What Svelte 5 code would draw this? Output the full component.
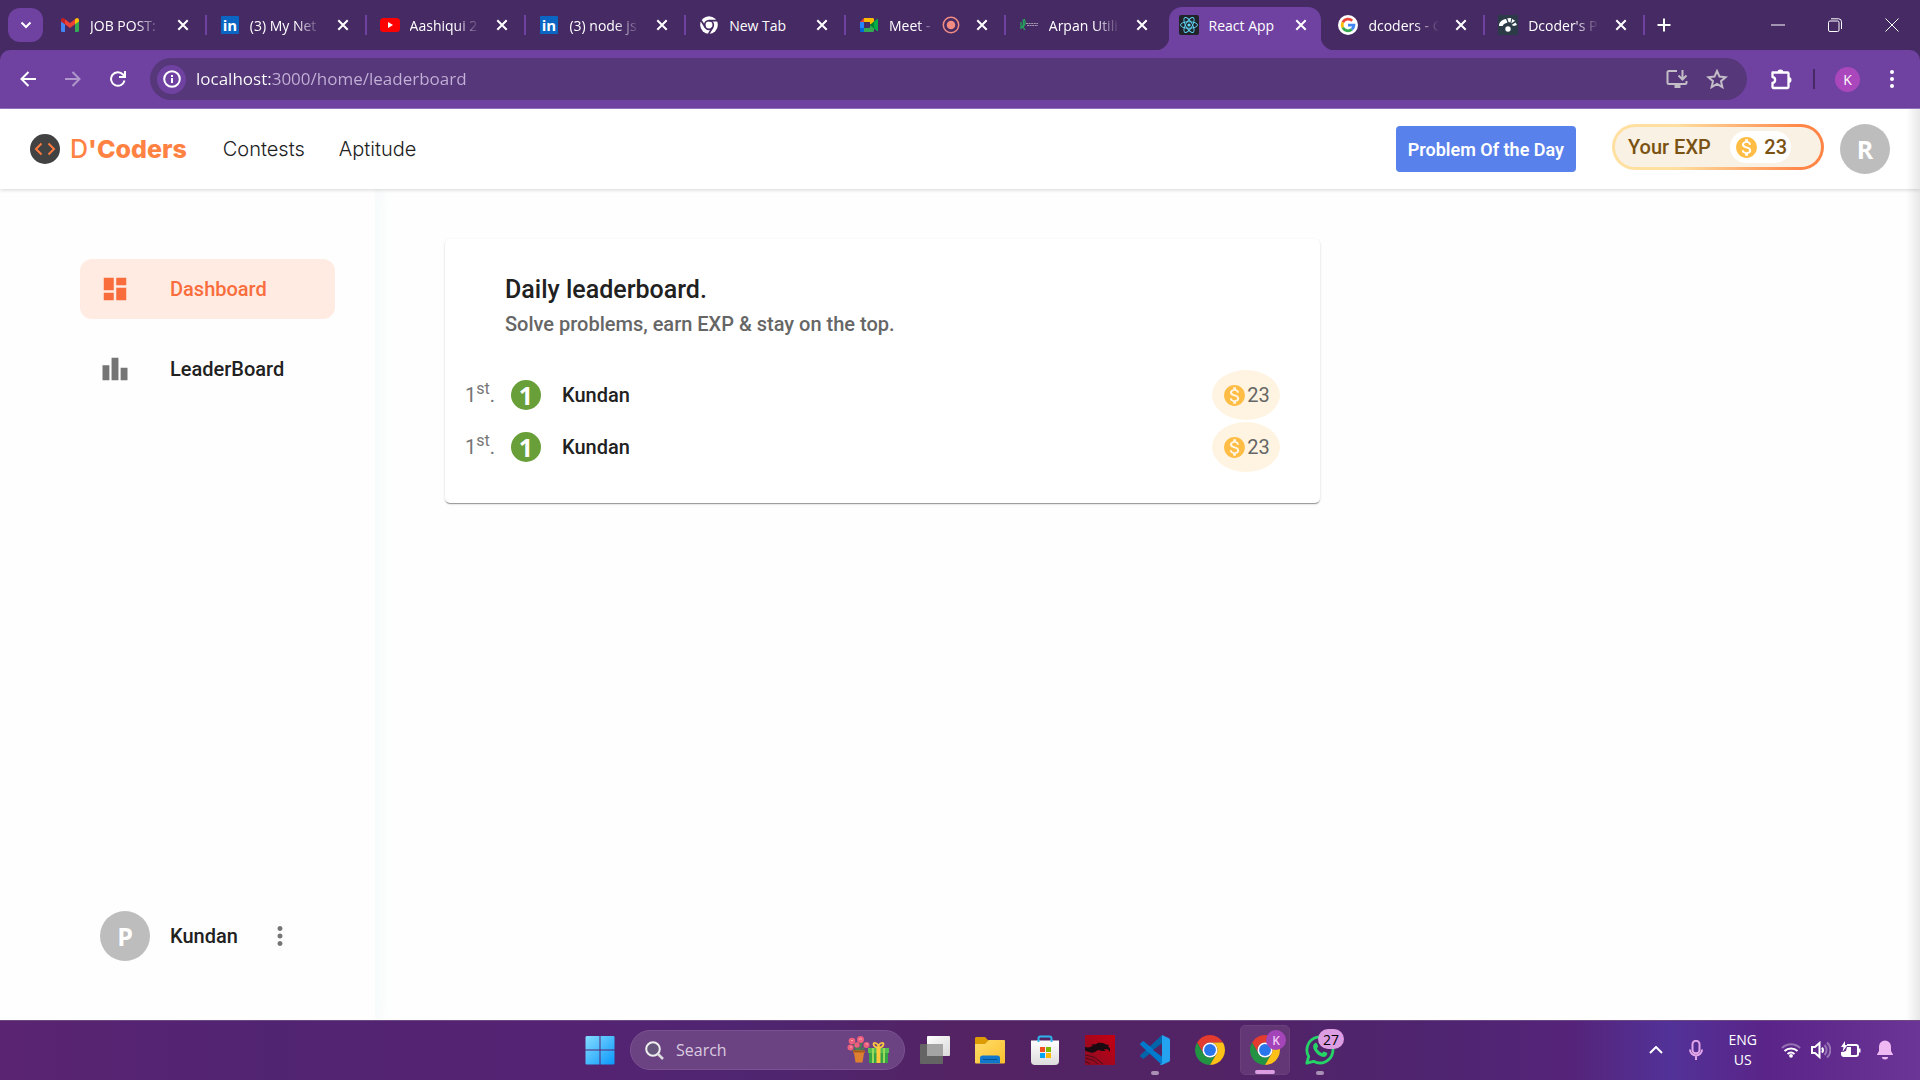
<script lang="ts">
  interface Tab {
    icon: string;
    title: string;
    active?: boolean;
    recording?: boolean;
    fits?: boolean;
  }

  interface Entry {
    rank: number;
    name: string;
    exp: number;
  }

  const tabs: Tab[] = [
    { icon: "gmail", title: "JOB POST:" },
    { icon: "linkedin", title: "(3) My Net" },
    { icon: "youtube", title: "Aashiqui 2" },
    { icon: "linkedin", title: "(3) node js" },
    { icon: "chrome-mono", title: "New Tab", fits: true },
    { icon: "meet", title: "Meet -", recording: true },
    { icon: "arpan", title: "Arpan Utili" },
    { icon: "react", title: "React App", active: true, fits: true },
    { icon: "google", title: "dcoders - G" },
    { icon: "dcoder", title: "Dcoder's P" },
  ];

  const apps = ["taskview", "explorer", "store", "dragon", "vscode", "chrome", "chrome-k", "whatsapp"];
  const running = ["vscode", "whatsapp"];

  const entries: Entry[] = [
    { rank: 1, name: "Kundan", exp: 23 },
    { rank: 1, name: "Kundan", exp: 23 },
  ];

  let url: string = $state("localhost:3000/home/leaderboard");
  let query: string = $state("");
</script>

{#snippet chromeWheel()}
  <svg viewBox="0 0 48 48" aria-hidden="true">
    <path fill="#e33b2e" d="M24 12h20.78A24 24 0 0 0 3.22 12L13.6 30A12 12 0 0 1 24 12z" />
    <path fill="#229342" d="M3.22 12A24 24 0 0 0 24 48l10.4-18a12 12 0 0 1-20.8 0z" />
    <path fill="#fbc116" d="M24 48a24 24 0 0 0 20.78-36H24a12 12 0 0 1 10.4 18z" />
    <circle cx="24" cy="24" r="12" fill="#fff" />
    <circle cx="24" cy="24" r="9.5" fill="#2a75ec" />
  </svg>
{/snippet}

{#snippet closeIcon()}
  <svg viewBox="0 0 12 12" aria-hidden="true">
    <path d="M1.3 1.3l9.4 9.4M10.7 1.3l-9.4 9.4" stroke="#fff" stroke-width="2" />
  </svg>
{/snippet}

{#snippet coin()}
  <svg class="coin" viewBox="0 0 24 24" aria-hidden="true">
    <path
      fill="#ffbd45"
      d="M12 2C6.48 2 2 6.48 2 12s4.48 10 10 10 10-4.48 10-10S17.52 2 12 2zm1.41 16.09V20h-2.67v-1.93c-1.71-.36-3.16-1.46-3.27-3.4h1.96c.1 1.05.82 1.87 2.65 1.87 1.96 0 2.4-.98 2.4-1.59 0-.83-.44-1.61-2.67-2.14-2.48-.6-4.18-1.62-4.18-3.67 0-1.72 1.39-2.84 3.11-3.21V4h2.67v1.95c1.86.45 2.79 1.86 2.85 3.39H14.3c-.05-1.11-.64-1.87-2.22-1.87-1.5 0-2.4.68-2.4 1.64 0 .84.65 1.39 2.67 1.91s4.18 1.39 4.18 3.91c-.01 1.83-1.38 2.83-3.12 3.16z"
    />
  </svg>
{/snippet}

{#snippet favicon(name: string)}
  <span class="favicon">
    {#if name === "gmail"}
      <svg viewBox="0 0 18 18">
        <path fill="#4285f4" d="M0 4.5L4 7.5V16H1.3A1.3 1.3 0 0 1 0 14.7z" />
        <path fill="#34a853" d="M18 4.5l-4 3V16h2.7a1.3 1.3 0 0 0 1.3-1.3z" />
        <path fill="#ea4335" d="M4 3.2l5 3.9 5-3.9v5L9 12 4 8.2z" />
        <path fill="#c5221f" d="M0 4c0-1.9 2-2.6 3.3-1.4L4 3.2v5L0 5.5z" />
        <path fill="#fbbc04" d="M18 4c0-1.9-2-2.6-3.3-1.4L14 3.2v5l4-2.7z" />
      </svg>
    {:else if name === "linkedin"}
      <svg viewBox="0 0 18 18">
        <rect width="18" height="18" rx="1" fill="#0a66c2" />
        <text x="9" y="15" text-anchor="middle" class="in-mark">in</text>
      </svg>
    {:else if name === "youtube"}
      <svg class="wide" viewBox="0 0 20 18">
        <rect y="2" width="20" height="14" rx="3.5" fill="#f00" />
        <path d="M8 6l5 3-5 3z" fill="#fff" />
      </svg>
    {:else if name === "chrome-mono"}
      <svg viewBox="0 0 48 48">
        <circle cx="24" cy="24" r="23.5" fill="#fff" />
        <circle cx="24" cy="24" r="11.5" fill="none" stroke="#462a64" stroke-width="4.5" />
        <path d="M24 12.5h22M14 30L3 12M34 30L23 48" stroke="#462a64" stroke-width="4.5" />
      </svg>
    {:else if name === "meet"}
      <svg viewBox="0 0 18 18">
        <path d="M0 6l4-4v4z" fill="#ea4335" />
        <path d="M0 6h4v6H0z" fill="#2684fc" />
        <path d="M0 12h4v4H1.3A1.3 1.3 0 0 1 0 14.7z" fill="#0066da" />
        <path d="M4 2h8.7A1.3 1.3 0 0 1 14 3.3V9l-4-1V6H4z" fill="#ffba00" />
        <path d="M4 12h6v-2l4-2v6.7a1.3 1.3 0 0 1-1.3 1.3H4z" fill="#34a853" />
        <path d="M10 9l7-6c.5-.4 1 0 1 .4v11.2c0 .5-.5.8-1 .4z" fill="#00ac47" />
        <path d="M10 9l4-3.4v6.9z" fill="#00832d" />
      </svg>
    {:else if name === "arpan"}
      <svg viewBox="0 0 18 18">
        <path d="M1 12c2-1 3-4 2-8.5M1 6v7M4 3c2 3 1 6-1 8l2 3" fill="none" stroke="#26a65b" stroke-width="1.3" />
        <path d="M6 7.5h12M7 9.5h11" stroke="#a79bb4" stroke-width="1" stroke-dasharray="2 .6" />
      </svg>
    {:else if name === "react"}
      <svg class="wide" viewBox="0 0 20 20">
        <rect width="20" height="20" rx="2" fill="#20232a" />
        <g fill="none" stroke="#61dafb" stroke-width=".9">
          <ellipse cx="10" cy="10" rx="8.5" ry="3.3" />
          <ellipse cx="10" cy="10" rx="8.5" ry="3.3" transform="rotate(60 10 10)" />
          <ellipse cx="10" cy="10" rx="8.5" ry="3.3" transform="rotate(120 10 10)" />
        </g>
        <circle cx="10" cy="10" r="1.6" fill="#61dafb" />
      </svg>
    {:else if name === "google"}
      <svg class="wide" viewBox="0 0 20 20">
        <circle cx="10" cy="10" r="10" fill="#fff" />
        <g fill="none" stroke-width="2.8">
          <path d="M14.2 5.8A5.9 5.9 0 0 0 4.8 7.3" stroke="#ea4335" />
          <path d="M4.8 7.3a5.9 5.9 0 0 0 0 5.4" stroke="#fbbc05" />
          <path d="M4.8 12.7a5.9 5.9 0 0 0 9 1.7" stroke="#34a853" />
          <path d="M10 10.1h5.9a5.9 5.9 0 0 1-2.1 4.3" stroke="#4285f4" />
        </g>
      </svg>
    {:else}
      <svg class="wide" viewBox="0 0 20 20">
        <rect width="20" height="20" fill="#2b3b47" />
        <path
          d="M1 11c0-4 3-6.500 7-7l1.500 3.500-3.500 1.500-1.500 2zM9.300 3.200l4-.2-.8 4.500-2-.5zM14.200 4l3 1.800-4 2.700zM17.500 7.500l1.500 2.500-3 1-2.500-1z"
          fill="#fff"
        />
        <circle cx="10" cy="14" r="2.700" fill="#fff" />
      </svg>
    {/if}
  </span>
{/snippet}

{#snippet appIcon(name: string)}
  {#if name === "taskview"}
    <svg viewBox="0 0 30 30">
      <defs>
        <linearGradient id="tv" x2="1" y2="1"><stop stop-color="#fff" /><stop offset="1" stop-color="#d8d8d8" /></linearGradient>
      </defs>
      <rect x="0" y="9" width="23" height="20" rx="1" fill="#646464" />
      <rect x="7" y="1" width="23" height="20" rx="1" fill="url(#tv)" />
      <path d="M7 9h16v12H7z" fill="#a4a4a4" />
    </svg>
  {:else if name === "explorer"}
    <svg viewBox="0 0 30 30">
      <defs>
        <linearGradient id="fx" x2="1" y2="1"><stop stop-color="#ffdc6b" /><stop offset="1" stop-color="#fbc02c" /></linearGradient>
      </defs>
      <path d="M0 3.5C0 2.5.7 2 1.5 2H10l3 3h3v5H0z" fill="#dd9b05" />
      <path d="M0 9h10l4-4h15a1 1 0 0 1 1 1v21.5a1 1 0 0 1-1 1H1a1 1 0 0 1-1-1z" fill="url(#fx)" />
      <path d="M5 28.5V23c0-1.5 1-2.5 2.5-2.5h15c1.5 0 2.5 1 2.5 2.5v5.5z" fill="#1078cc" />
      <path d="M8 24.5h14" stroke="#07508f" />
    </svg>
  {:else if name === "store"}
    <svg viewBox="0 0 30 30">
      <defs>
        <linearGradient id="st" x2="0" y2="1"><stop stop-color="#fff" /><stop offset="1" stop-color="#dcdcdc" /></linearGradient>
      </defs>
      <path d="M8.5 8V3.5a2 2 0 0 1 2-2h9a2 2 0 0 1 2 2V8" fill="none" stroke="#2db3ee" stroke-width="2" />
      <path d="M1 5.5h28V26a4 4 0 0 1-4 4H5a4 4 0 0 1-4-4z" fill="url(#st)" />
      <path d="M7.5 5h2v2h-2zM20.5 5h2v2h-2z" fill="#2db3ee" />
      <path d="M10 12h5v5h-5z" fill="#f25022" />
      <path d="M16 12h5v5h-5z" fill="#7fba00" />
      <path d="M10 18h5v5h-5z" fill="#00a4ef" />
      <path d="M16 18h5v5h-5z" fill="#ffb900" />
    </svg>
  {:else if name === "dragon"}
    <svg viewBox="0 0 30 30">
      <defs>
        <linearGradient id="dr" x1="1" x2="0" y2="1"><stop stop-color="#c70012" /><stop offset="1" stop-color="#8a0c24" /></linearGradient>
      </defs>
      <path d="M0 0h30v30H0z" fill="url(#dr)" />
      <path
        d="M0 12c4 1 6 0 8-1.500L6 9.500l5-.3 2-1.400 5 .2 3 1.500 3 .5-1 1 2 2.500v3.500l-2-2.500-4-.5 1.500 2H17l-4-1-4 2.500c-3 .5-6-.5-9-2z"
        fill="#180a10"
      />
      <path d="M0 20l9 2 9 7M0 23l8 2 5 4M0 26l5 3" fill="none" stroke="#4b0c1b" />
    </svg>
  {:else if name === "vscode"}
    <svg viewBox="0 0 30 30">
      <path d="M22 0v8.5L4 23.5c-.5.4-1 .4-1.5 0L.5 21.7c-.6-.5-.6-1.2 0-1.7z" fill="#0065a9" />
      <path d="M22 30v-8.5L4 6.5c-.5-.4-1-.4-1.500 0L.5 8.3c-.6.5-.6 1.2 0 1.7z" fill="#007acc" />
      <path d="M22 0l7 3.2c.6.3 1 .9 1 1.5v20.6c0 .6-.4 1.2-1 1.500L22 30z" fill="#23a3f0" />
      <path d="M22 8.5L13 15l9 6.5z" fill="#522465" />
      <path d="M22 0v30c-1 .2-1.7-.2-2.200-.7L22 28z" fill="#1b93de" />
    </svg>
  {:else if name === "whatsapp"}
    <svg viewBox="0 0 30 30">
      <path
        d="M1.8 28.2L3.7 21.5A13 13 0 1 1 8.6 26.3z"
        fill="none"
        stroke="#25d366"
        stroke-width="2.8"
        stroke-linejoin="round"
      />
      <path
        d="M9.500 8.500c1-1 2-.9 2.400 0l1.200 2.700c.2.700-1.100 1.700-1.100 2.200 1 2.100 2.800 3.700 5 4.600.6 0 1.400-1.700 2-1.600l3 1.400c.6.300.3 2.600-1.100 3.500-2.300 1.500-6.100 0-9.100-2.900-3.300-3.300-5-7.500-2.300-9.900z"
        fill="#25d366"
      />
    </svg>
    <span class="count">27</span>
  {:else}
    {@render chromeWheel()}
    {#if name === "chrome-k"}
      <span class="profile-badge">K</span>
    {/if}
  {/if}
{/snippet}

<div class="screen">
  <div class="tab-strip">
    <button class="tab-search" aria-label="Search tabs">
      <svg viewBox="0 0 12 8"><path d="M1.5 1.5L6 6l4.5-4.5" fill="none" stroke="#fff" stroke-width="2" /></svg>
    </button>
    <div class="tabs" role="tablist">
      {#each tabs as tab}
        <div class="tab" class:active={tab.active} role="tab" aria-selected={!!tab.active} tabindex="0">
          {@render favicon(tab.icon)}
          <span class="tab-title" class:fade={!tab.fits}>{tab.title}</span>
          {#if tab.recording}
            <svg class="rec" viewBox="0 0 18 18" aria-label="Recording">
              <circle cx="9" cy="9" r="7.7" fill="none" stroke="#f28b82" stroke-width="1.5" />
              <circle cx="9" cy="9" r="4.3" fill="#f28b82" />
            </svg>
          {/if}
          <button class="tab-close" aria-label="Close {tab.title}">{@render closeIcon()}</button>
        </div>
      {/each}
    </div>
    <button class="new-tab" aria-label="New tab">
      <svg viewBox="0 0 14 14"><path d="M7 .5v13M.5 7h13" stroke="#fff" stroke-width="2" /></svg>
    </button>
    <div class="window-controls">
      <button aria-label="Minimize"><svg viewBox="0 0 14 14"><path d="M0 7h14" /></svg></button>
      <button aria-label="Restore">
        <svg viewBox="0 0 14 14">
          <rect x=".5" y="3" width="10.5" height="10.5" rx="1.5" />
          <path d="M3 .8h7.5a3 3 0 0 1 3 3V11" />
        </svg>
      </button>
      <button aria-label="Close"><svg viewBox="0 0 14 14"><path d="M.5.5l13 13M13.5.5l-13 13" /></svg></button>
    </div>
  </div>

  <div class="toolbar-wrap">
    <div class="toolbar">
      <button class="nav-btn" aria-label="Back">
        <svg viewBox="0 0 16 16"><path d="M16 8H2M8.5 1L1.5 8l7 7" /></svg>
      </button>
      <button class="nav-btn dim" aria-label="Forward">
        <svg viewBox="0 0 16 16"><path d="M0 8h14M7.5 1l7 7-7 7" /></svg>
      </button>
      <button class="nav-btn" aria-label="Reload">
        <svg viewBox="0 0 16 16"><path d="M14.5 9.5A6.8 6.8 0 1 1 13 3.5l1.5 1.7M15 0v6H9" /></svg>
      </button>
      <div class="omnibox">
        <button class="site-info" aria-label="Site information">
          <svg viewBox="0 0 18 18">
            <circle cx="9" cy="9" r="7.8" fill="none" stroke="#fff" stroke-width="2" />
            <path d="M9 8v5M9 5v2" stroke="#fff" stroke-width="2" />
          </svg>
        </button>
        <input class="url" aria-label="Address" bind:value={url} />
        <button class="omni-btn" aria-label="Install app">
          <svg viewBox="0 0 22 20">
            <path d="M11 2H3a1.5 1.5 0 0 0-1.5 1.5v10A1.5 1.5 0 0 0 3 15h16a1.5 1.5 0 0 0 1.5-1.5V12M16.5 1v9M12.5 6.5l4 4 4-4" />
            <path d="M8.5 17.5h6" stroke-width="3" />
          </svg>
        </button>
        <button class="omni-btn" aria-label="Bookmark">
          <svg viewBox="0 0 22 20">
            <path d="M11 2l2.5 5.6 6.1.6-4.6 4 1.4 6-5.4-3.2-5.4 3.2 1.400-6-4.600-4 6.100-.6z" />
          </svg>
        </button>
      </div>
      <button class="ext-btn" aria-label="Extensions">
        <svg viewBox="0 0 22 22">
          <path
            d="M2.500 4.500h15a1 1 0 0 1 1 1v13.500a1 1 0 0 1-1 1h-14a1 1 0 0 1-1-1v-4c3.500-.5 3.500-5.500 0-6z"
            fill="none"
            stroke="#fff"
            stroke-width="2.3"
            stroke-linejoin="round"
          />
          <path d="M7.500 4.500a3 3 0 0 1 6 0zM18.500 9a3 3 0 0 1 0 6z" fill="#fff" />
        </svg>
      </button>
      <span class="divider"></span>
      <button class="profile" aria-label="Profile">K</button>
      <button class="menu-btn" aria-label="Menu">
        <svg viewBox="0 0 4 18"><circle cx="2" cy="2" r="2" /><circle cx="2" cy="9" r="2" /><circle cx="2" cy="16" r="2" /></svg>
      </button>
    </div>
  </div>

  <div class="page">
    <header>
      <a class="brand" href="/home">
        <svg viewBox="0 0 30 30" aria-hidden="true">
          <circle cx="15" cy="15" r="15" fill="#424242" />
          <path d="M11.5 9.5L6 15l5.5 5.5M18.5 9.5L24 15l-5.5 5.5" fill="none" stroke="#ff7a3d" stroke-width="2" />
        </svg>
        <span>D<b>'Coders</b></span>
      </a>
      <nav class="links">
        <a href="/home/contests">Contests</a>
        <a href="/home/aptitude">Aptitude</a>
      </nav>
      <button class="potd">Problem Of the Day</button>
      <div class="exp">
        <span>Your EXP</span>
        <span class="exp-value">{@render coin()}23</span>
      </div>
      <span class="avatar">R</span>
    </header>

    <div class="body">
      <aside>
        <nav class="side-nav">
          <a class="active" href="/home/dashboard">
            <svg viewBox="0 0 24 24" aria-hidden="true">
              <path d="M3 13h8V3H3v10zm0 8h8v-6H3v6zm10 0h8V11h-8v10zm0-18v6h8V3h-8z" />
            </svg>
            Dashboard
          </a>
          <a href="/home/leaderboard">
            <svg viewBox="0 0 24 24" aria-hidden="true">
              <path d="M7.5 21H2V9h5.5v12zm7.25-18h-5.5v18h5.5V3zM22 11h-5.5v10H22V11z" />
            </svg>
            LeaderBoard
          </a>
        </nav>
        <div class="user">
          <span class="avatar">P</span>
          <span class="user-name">Kundan</span>
          <button aria-label="User menu">
            <svg viewBox="0 0 24 24">
              <path
                d="M12 8c1.1 0 2-.9 2-2s-.9-2-2-2-2 .9-2 2 .9 2 2 2zm0 2c-1.1 0-2 .9-2 2s.9 2 2 2 2-.9 2-2-.9-2-2-2zm0 6c-1.1 0-2 .9-2 2s.9 2 2 2 2-.9 2-2-.9-2-2-2z"
              />
            </svg>
          </button>
        </div>
      </aside>

      <main>
        <section class="card">
          <h1>Daily leaderboard.</h1>
          <p>Solve problems, earn EXP &amp; stay on the top.</p>
          <ol>
            {#each entries as entry}
              <li>
                <span class="rank">{entry.rank}<sup>st</sup>.</span>
                <span class="medal">{entry.rank}</span>
                <span class="name">{entry.name}</span>
                <span class="points">{@render coin()}{entry.exp}</span>
              </li>
            {/each}
          </ol>
        </section>
      </main>
    </div>
  </div>

  <footer class="taskbar">
    <div class="pinned">
      <button class="app" aria-label="Start">
        <svg viewBox="0 0 30 30">
          <defs>
            <linearGradient id="win" x2="1" y2="1"><stop stop-color="#85dcff" /><stop offset="1" stop-color="#0a98fb" /></linearGradient>
          </defs>
          <path d="M1.5 1h13v13.5h-14V2zM15.5 1h13a1 1 0 0 1 1 1v12.5h-14zM.5 15.5h14v14h-13a1 1 0 0 1-1-1zM15.5 15.5h14v13a1 1 0 0 1-1 1h-13z" fill="url(#win)" />
        </svg>
      </button>
      <label class="search">
        <svg class="lens" viewBox="0 0 19 19" aria-hidden="true">
          <circle cx="8" cy="8" r="6.8" fill="#66567c" stroke="#eee" stroke-width="2" />
          <path d="M13 13l5 5" stroke="#ddd" stroke-width="2.5" />
        </svg>
        <input aria-label="Search" placeholder="Search" bind:value={query} />
        <svg class="gifts" viewBox="0 0 42 28" aria-hidden="true">
          <path d="M7 15l-4-3M11 15l-1-9M12 15l3-9M13 15l6-5M10 16l-3-8" fill="none" stroke="#3f8f47" stroke-width="1.5" />
          <g fill="#ec5f7d">
            <circle cx="5" cy="5" r="3.3" /><circle cx="13.5" cy="3.5" r="3.5" /><circle cx="3.5" cy="11.5" r="3" />
            <circle cx="10" cy="9" r="2.7" /><circle cx="19.5" cy="9" r="3" />
          </g>
          <path d="M12 3h3M4 4.5h2M3 11h2M19 8h2" stroke="#ffa3ad" />
          <path d="M6 14.5h12v2.5h-1l-1.5 9.5h-7L7 17H6z" fill="#dd8130" />
          <path d="M6 14.5h12v2H6z" fill="#a9581b" />
          <path d="M22 16h19v11H22z" fill="#35a245" />
          <path d="M21 12h21v5H21z" fill="#55bf50" />
          <path d="M25 12h2v15h-2zM36 12h2v15h-2z" fill="#99d95a" />
          <path d="M29.5 12h4v15h-4z" fill="#ffc83d" />
          <path d="M31.5 12c-6-1-6-6-3-5 2 .5 3 3 3 5 0-2 1-4.5 3-5 3-1 3 4-3 5" fill="none" stroke="#ffc83d" stroke-width="1.8" />
        </svg>
      </label>
      {#each apps as app}
        <button
          class="app"
          class:focused={app === "chrome-k"}
          class:running={running.includes(app)}
          aria-label={app}
        >
          {@render appIcon(app)}
        </button>
      {/each}
    </div>

    <div class="tray">
      <button class="caret" aria-label="Show hidden icons">
        <svg viewBox="0 0 14 8"><path d="M1 7l6-6 6 6" fill="none" stroke="#fff" stroke-width="2" /></svg>
      </button>
      <button class="mic" aria-label="Microphone">
        <svg viewBox="0 0 14 20">
          <rect x="3.5" y=".8" width="7" height="12.5" rx="3.5" />
          <path d="M1 9.5a6 6 0 0 0 12 0M7 16v4" />
        </svg>
      </button>
      <button class="lang"><span>ENG</span><span>US</span></button>
      <button class="status" aria-label="Network, volume and battery">
        <svg viewBox="0 0 20 16">
          <path d="M1 6a12.5 12.5 0 0 1 18 0" opacity=".35" />
          <path d="M3.5 9a9.5 9.5 0 0 1 13 0M6.5 12a5.5 5.5 0 0 1 7 0" />
          <circle cx="10" cy="13.8" r="1.9" fill="#fff" stroke="none" />
        </svg>
        <svg viewBox="0 0 20 18">
          <path d="M1 6h3l4.5-4v14L4 12H1z" />
          <path d="M11 6.5a4 4 0 0 1 0 5" />
          <path d="M13.5 4a7 7 0 0 1 0 10M16 1.5a10 10 0 0 1 0 15" opacity=".35" />
        </svg>
        <svg viewBox="0 0 20 18">
          <path d="M6 4h9a2 2 0 0 1 2 2v7a2 2 0 0 1-2 2H3a2 2 0 0 1-2-2v-2" />
          <path d="M2 14v-3l3-1 1-4h4v8zM18 7.5h1.5v4H18z" fill="#fff" stroke="none" />
          <path d="M4 0L0 6h2.5l-1 5L6.5 4H4z" fill="#fff" stroke="none" />
        </svg>
      </button>
      <button class="bell" aria-label="Notifications">
        <svg viewBox="0 0 16 20">
          <path d="M8 .5a6 6 0 0 1 6 6V11l2 3.5v.5H0v-.5L2 11V6.5a6 6 0 0 1 6-6zM5 17h6a3 2.5 0 0 1-6 0z" fill="#f0b8f2" />
        </svg>
      </button>
    </div>
  </footer>
</div>

<style>
  :global(body) {
    margin: 0;
    background: #fefefe;
  }

  .screen {
    display: flex;
    flex-direction: column;
    min-height: 100vh;
    font-family: Roboto, "Liberation Sans", sans-serif;
  }

  button {
    padding: 0;
    border: none;
    background: none;
    color: inherit;
    font: inherit;
    cursor: pointer;
    display: flex;
    align-items: center;
    justify-content: center;
    flex: none;
  }

  svg {
    display: block;
    flex: none;
  }

  a {
    color: inherit;
    text-decoration: none;
  }

  .tab-strip,
  .toolbar,
  .taskbar {
    font-family: "Open Sans", "Noto Sans", sans-serif;
    color: #fff;
  }

  /* browser tabs */
  .tab-strip {
    display: flex;
    align-items: center;
    height: 50px;
    padding-left: 8px;
    background: #462a64;
  }

  .tab-search {
    width: 35px;
    height: 34px;
    border-radius: 12px;
    background: #6f42a1;
  }

  .tab-search svg {
    width: 12px;
    height: 8px;
  }

  .tabs {
    display: flex;
    flex: 0 1 1598px;
    min-width: 0;
    margin-left: 4px;
  }

  .tab {
    position: relative;
    display: flex;
    align-items: center;
    flex: 1 1 0;
    min-width: 0;
    height: 50px;
    box-sizing: border-box;
    padding: 0 18px 0 14px;
    font-size: 14px;
  }

  .tab::before {
    content: "";
    position: absolute;
    right: 0;
    top: 15px;
    width: 2px;
    height: 20px;
    background: #6f42a1;
  }

  .tab.active {
    z-index: 1;
  }

  /* the selected tab: rounded body that flares into the toolbar */
  .tab.active::before {
    inset: 7px 4px 0 3px;
    width: auto;
    height: auto;
    border-radius: 13px 13px 0 0;
    z-index: -1;
  }

  .tab.active::after {
    content: "";
    position: absolute;
    left: -11px;
    right: -10px;
    bottom: 0;
    height: 14px;
    z-index: -2;
    background:
      radial-gradient(circle at 0 0, transparent 14px, #6f42a1 15px) left / 14px 14px no-repeat,
      radial-gradient(circle at 100% 0, transparent 14px, #6f42a1 15px) right / 14px 14px no-repeat;
  }

  .tab:has(+ .active)::before {
    display: none;
  }

  .favicon {
    display: flex;
    justify-content: center;
    width: 18px;
    margin-right: 11px;
    flex: none;
  }

  .favicon svg {
    width: 18px;
    height: 18px;
  }

  .favicon svg.wide {
    width: 20px;
    height: 20px;
  }

  .in-mark {
    font: 700 15px "Open Sans", sans-serif;
    fill: #fff;
  }

  .tab-title {
    flex: 1;
    min-width: 0;
    overflow: hidden;
    white-space: nowrap;
  }

  .fade {
    mask-image: linear-gradient(to right, #000 65%, transparent);
  }

  .rec {
    width: 18px;
    height: 18px;
    margin-left: 8px;
  }

  .tab-close {
    margin-left: 16px;
  }

  .tab-close svg {
    width: 12px;
    height: 12px;
  }

  .new-tab {
    width: 38px;
    height: 34px;
  }

  .new-tab svg {
    width: 14px;
    height: 14px;
  }

  .window-controls {
    display: flex;
    margin-left: auto;
  }

  .window-controls button {
    width: 57px;
    height: 50px;
  }

  .window-controls svg {
    width: 14px;
    height: 14px;
    fill: none;
    stroke: #fff;
  }

  /* address bar */
  .toolbar-wrap {
    background: #462a64;
  }

  .toolbar {
    display: flex;
    align-items: center;
    height: 58px;
    padding: 0 8px 0 5px;
    border-radius: 10px 10px 0 0;
    border-bottom: 1px solid #9a76c2;
    background: #6f42a1;
  }

  .nav-btn {
    width: 45px;
    height: 42px;
  }

  .nav-btn svg {
    width: 16px;
    height: 16px;
    fill: none;
    stroke: #fff;
    stroke-width: 2;
  }

  .dim {
    opacity: 0.45;
  }

  .omnibox {
    display: flex;
    align-items: center;
    flex: 1;
    height: 42px;
    box-sizing: border-box;
    padding: 0 10px 0 7px;
    margin: 0 14px 0 10px;
    border-radius: 21px;
    background: #56377a;
  }

  .site-info {
    width: 29px;
    height: 29px;
    border-radius: 50%;
    background: #6f42a1;
  }

  .site-info svg {
    width: 18px;
    height: 18px;
  }

  .url {
    flex: 1;
    min-width: 0;
    padding: 0;
    margin-left: 10px;
    border: none;
    outline: none;
    font: 17px "Open Sans", "Noto Sans", sans-serif;
    line-height: 24px;
    /* host in white, the rest of the address muted */
    background: linear-gradient(to right, #fff 75px, #c3b1d8 75px);
    background-clip: text;
    color: transparent;
  }

  .omni-btn {
    width: 40px;
    height: 34px;
  }

  .omni-btn svg {
    width: 22px;
    height: 20px;
    fill: none;
    stroke: #c2bdc6;
    stroke-width: 2;
  }

  .ext-btn {
    width: 40px;
    height: 34px;
  }

  .ext-btn svg {
    width: 22px;
    height: 22px;
  }

  .divider {
    width: 2px;
    height: 20px;
    margin: 0 20px 0 12px;
    background: #462a64;
  }

  .profile {
    width: 25px;
    height: 25px;
    border-radius: 50%;
    background: #ab47bc;
    font-size: 14px;
  }

  .menu-btn {
    width: 40px;
    height: 34px;
    margin-left: 12px;
  }

  .menu-btn svg {
    width: 4px;
    height: 18px;
    fill: #fff;
  }

  /* web page */
  .page {
    position: relative;
    display: flex;
    flex-direction: column;
    flex: 1;
  }

  .page::after {
    content: "";
    position: absolute;
    top: 0;
    right: 0;
    bottom: 0;
    width: 14px;
    background: linear-gradient(to right, transparent, rgba(0, 0, 0, 0.09));
    pointer-events: none;
  }

  header {
    position: relative;
    display: flex;
    align-items: center;
    height: 80px;
    box-sizing: border-box;
    padding: 0 30px;
    background: #fff;
    box-shadow: 0 1px 4px rgba(0, 0, 0, 0.16);
  }

  .brand {
    display: flex;
    align-items: center;
    gap: 10px;
    font: 500 25px Inter, sans-serif;
    color: #ff8243;
  }

  .brand svg {
    width: 30px;
    height: 30px;
  }

  .brand b {
    font-weight: 800;
  }

  .links {
    display: flex;
    gap: 34px;
    margin-left: 36px;
    font: 300 20px Inter, sans-serif;
    color: #212121;
  }

  .potd {
    height: 46px;
    padding: 0 12px;
    margin-left: auto;
    border-radius: 4px;
    background: #5881eb;
    color: #fff;
    font-size: 18px;
    font-weight: 600;
  }

  .exp {
    display: flex;
    align-items: center;
    justify-content: space-between;
    width: 212px;
    height: 46px;
    box-sizing: border-box;
    padding: 0 30px 0 13px;
    margin: 0 16px 4px 36px;
    border: 3px solid transparent;
    border-radius: 23px;
    background:
      linear-gradient(#f9f1e3, #f9f1e3) padding-box,
      linear-gradient(to right, #ffe0a0 30%, #ff8547 90%) border-box;
    color: #7a5214;
    font-size: 20px;
    font-weight: 500;
  }

  .exp-value {
    display: flex;
    align-items: center;
    gap: 5px;
    height: 32px;
    padding: 0 4px;
    border-radius: 16px;
    background: #fff;
  }

  .coin {
    width: 25px;
    height: 25px;
  }

  .avatar {
    display: flex;
    align-items: center;
    justify-content: center;
    width: 50px;
    height: 50px;
    flex: none;
    border-radius: 50%;
    background: #bdbdbd;
    color: #fff;
    font: 700 25px "Open Sans", sans-serif;
  }

  .body {
    display: flex;
    flex: 1;
    overflow: hidden;
  }

  aside {
    display: flex;
    flex-direction: column;
    justify-content: space-between;
    width: 375px;
    box-sizing: border-box;
    padding: 70px 40px 59px 80px;
    background: #fefefe;
    box-shadow: 6px 0 14px #f5fafa;
    color: #212121;
    font-size: 20px;
    font-weight: 500;
  }

  .side-nav {
    display: flex;
    flex-direction: column;
    gap: 20px;
  }

  .side-nav a {
    display: flex;
    align-items: center;
    gap: 40px;
    height: 60px;
    padding-left: 20px;
    border-radius: 12px;
  }

  .side-nav svg {
    width: 30px;
    height: 30px;
    fill: #757575;
  }

  .side-nav .active {
    background: #ffebe2;
    color: #f96d3c;
  }

  .side-nav .active svg {
    fill: #f96d3c;
  }

  .user {
    display: flex;
    align-items: center;
    padding-left: 20px;
  }

  .user-name {
    margin: 0 27px 0 20px;
  }

  .user svg {
    width: 30px;
    height: 30px;
    fill: #757575;
  }

  main {
    flex: 1;
    min-width: 0;
    padding: 50px 70px;
  }

  .card {
    max-width: 875px;
    box-sizing: border-box;
    padding: 36px 40px 31px 20px;
    border-radius: 5px;
    background: #fff;
    box-shadow:
      0 2px 1px -1px rgba(0, 0, 0, 0.25),
      0 1px 1px rgba(0, 0, 0, 0.14),
      0 1px 3px rgba(0, 0, 0, 0.12);
    color: #212121;
    font-size: 20px;
    font-weight: 500;
  }

  h1 {
    margin: 0 0 0 40px;
    font-size: 25px;
    font-weight: 500;
    line-height: 30px;
  }

  p {
    margin: 4px 0 0 40px;
    line-height: 30px;
    color: #666;
  }

  ol {
    list-style: none;
    padding: 0;
    margin: 31px 0 0;
    display: flex;
    flex-direction: column;
    gap: 2px;
  }

  li {
    display: flex;
    align-items: center;
    height: 50px;
  }

  .rank {
    width: 46px;
    font-weight: 400;
    color: #757575;
  }

  sup {
    font-size: 16px;
    line-height: 0;
  }

  .medal {
    display: flex;
    align-items: center;
    justify-content: center;
    width: 30px;
    height: 30px;
    border-radius: 50%;
    background: #689f38;
    color: #fff;
    font: 700 25px "Open Sans", sans-serif;
  }

  .name {
    margin-left: 21px;
  }

  .points {
    display: flex;
    align-items: center;
    justify-content: center;
    width: 68px;
    height: 50px;
    margin-left: auto;
    border-radius: 50%;
    background: #fff4e1;
    color: #666;
    font-weight: 400;
  }

  /* desktop taskbar */
  .taskbar {
    display: grid;
    grid-template-columns: 1fr auto 1fr;
    align-items: center;
    height: 60px;
    box-shadow: inset 0 1px #6e4880;
    background: linear-gradient(
      to right,
      #5a2472,
      #512471 14%,
      #552373 28%,
      #4f2570 40%,
      #532363 50%,
      #522465 62%,
      #4f2470 75%,
      #55247a 82%,
      #523298 87%,
      #5a2488 92%,
      #6a3596
    );
  }

  .pinned {
    grid-column: 2;
    display: flex;
    align-items: center;
    gap: 5px;
  }

  .app {
    position: relative;
    width: 50px;
    height: 50px;
    box-sizing: border-box;
    border-radius: 5px;
  }

  .app svg {
    width: 30px;
    height: 30px;
  }

  .app.focused {
    border: 1px solid #69407a;
    background: #633776;
  }

  .app.running::after,
  .app.focused::after {
    content: "";
    position: absolute;
    bottom: 0;
    left: 50%;
    width: 8px;
    height: 4px;
    margin-left: -4px;
    border-radius: 2px;
    background: #ab90b6;
  }

  .app.focused::after {
    width: 20px;
    margin-left: -10px;
    background: #dd9de3;
  }

  .count,
  .profile-badge {
    position: absolute;
    display: flex;
    align-items: center;
    justify-content: center;
    top: 4px;
    height: 20px;
    border-radius: 10px;
  }

  .count {
    left: 23px;
    width: 26px;
    background: #dd9de3;
    color: #000;
    font-size: 14px;
  }

  .profile-badge {
    left: 25px;
    width: 20px;
    background: #a344b8;
    color: #f1c8f7;
    font-size: 12px;
    font-weight: 600;
  }

  .search {
    display: flex;
    align-items: center;
    width: 275px;
    height: 40px;
    box-sizing: border-box;
    padding: 0 15px 0 14px;
    border: 1px solid #7b5291;
    border-radius: 20px;
    background: #6c4382;
  }

  .lens {
    width: 19px;
    height: 19px;
  }

  .search input {
    flex: 1;
    min-width: 0;
    padding: 0;
    margin-left: 12px;
    border: none;
    outline: none;
    background: none;
    color: #fff;
    font: 16px "Open Sans", "Noto Sans", sans-serif;
  }

  .search input::placeholder {
    color: #d9cbe0;
    opacity: 1;
  }

  .gifts {
    width: 42px;
    height: 28px;
  }

  .tray {
    display: flex;
    align-items: center;
    justify-content: flex-end;
    padding-right: 27px;
  }

  .caret svg {
    width: 14px;
    height: 8px;
  }

  .mic {
    margin: 0 26px;
  }

  .mic svg {
    width: 14px;
    height: 20px;
    fill: none;
    stroke: #e3a6e8;
    stroke-width: 2;
  }

  .lang {
    flex-direction: column;
    font-size: 14px;
    line-height: 20px;
  }

  .status {
    gap: 10px;
    margin: 0 16px 0 24px;
  }

  .status svg {
    width: 20px;
    height: 18px;
    fill: none;
    stroke: #fff;
    stroke-width: 2;
  }

  .bell svg {
    width: 16px;
    height: 20px;
  }
</style>
